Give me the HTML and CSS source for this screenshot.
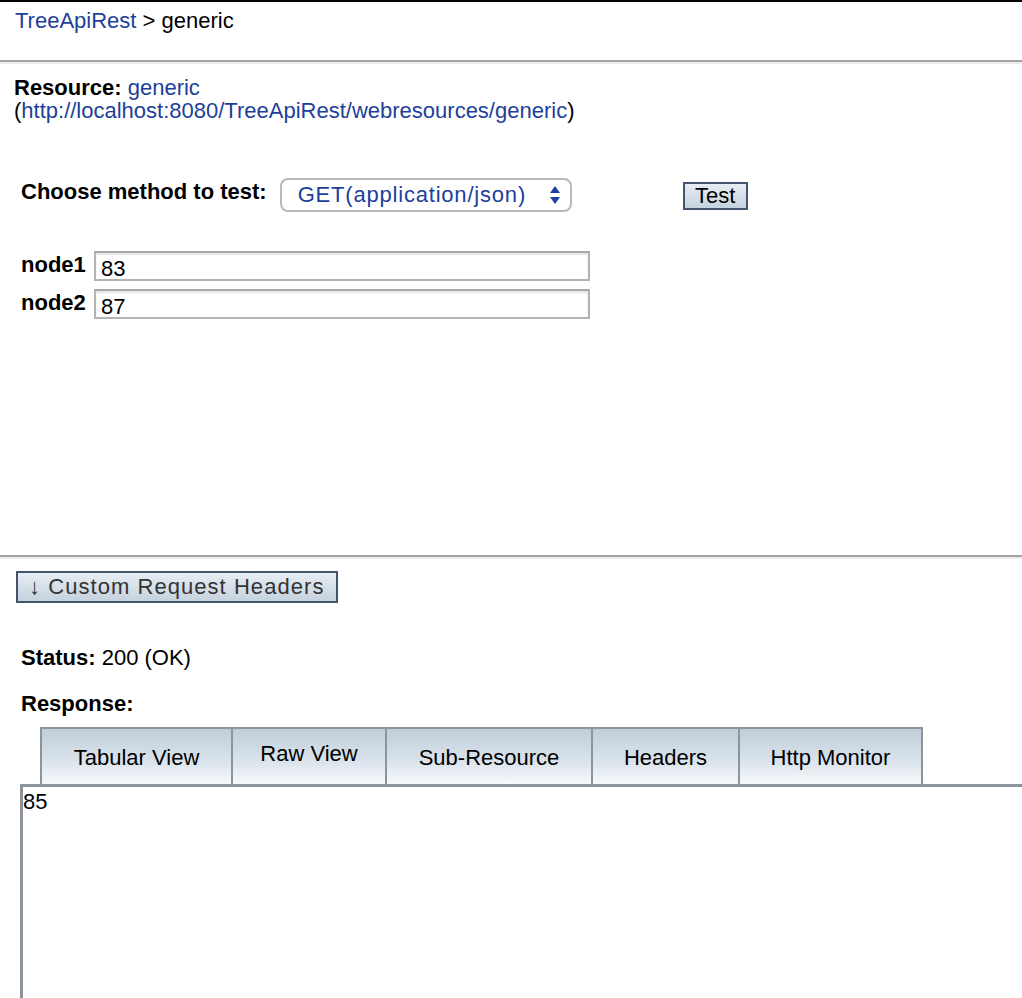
FILE: index.html
```html
<!DOCTYPE html>
<html>
<head>
<meta charset="utf-8">
<title>TreeApiRest</title>
<link rel="stylesheet" href="styles.css">
</head>
<body>
<div class="topbar">
  <div class="crumbs"><a class="link" href="#">TreeApiRest</a> &gt; generic</div>
</div>
<div class="sep"></div>
<div class="resource">
  <div><b>Resource:</b> <a class="link" href="#">generic</a></div>
  <div>(<a class="link" href="#">http://localhost:8080/TreeApiRest/webresources/generic</a>)</div>
</div>
<div class="form">
  <div class="method-row">
    <span class="label">Choose method to test:</span>
    <div class="select">
      <span>GET(application/json)</span>
      <svg class="arrows" width="10" height="18" viewBox="0 0 10 18"><path d="M5 0 L10 7 L0 7 Z M0 11 L10 11 L5 18 Z" fill="#1f3f9e"/></svg>
    </div>
    <button class="btn test">Test</button>
  </div>
  <div class="params">
    <div class="param"><span class="label">node1</span><div class="input">83</div></div>
    <div class="param"><span class="label">node2</span><div class="input">87</div></div>
  </div>
</div>
<div class="sep"></div>
<div class="results">
  <button class="btn headers">↓ Custom Request Headers</button>
  <div class="status"><b>Status:</b> 200 (OK)</div>
  <div class="response-label"><b>Response:</b></div>
  <div class="tabs">
    <div class="tab t1">Tabular View</div>
    <div class="tab t2 raised">Raw View</div>
    <div class="tab t3">Sub-Resource</div>
    <div class="tab t4">Headers</div>
    <div class="tab t5">Http Monitor</div>
  </div>
  <div class="content">85</div>
</div>
</body>
</html>
```
FILE: styles.css
```css
html, body {
  margin: 0;
  padding: 0;
  background: #fff;
}
body {
  font-family: "Liberation Sans", Arial, sans-serif;
  font-size: 22px;
  color: #000;
  overflow: hidden;
  height: 998px;
}
.link {
  color: #1d3f9a;
  text-decoration: none;
}
.topbar {
  border-top: 2px solid #000;
  height: 58px;
}
.crumbs {
  padding: 6px 0 0 15px;
  line-height: 25px;
}
.sep {
  border-top: 2px solid #a2a2a2;
  border-bottom: 2px solid #ececec;
}
.resource {
  padding: 12px 0 0 14px;
  line-height: 23px;
}
.form {
  padding: 55px 0 0 21px;
  height: 433px;
  box-sizing: border-box;
}
.method-row {
  display: flex;
  align-items: flex-start;
}
.method-row .label {
  font-weight: bold;
  line-height: 25px;
  margin-top: 2px;
}
.select {
  margin-left: 13px;
  margin-top: 1px;
  width: 292px;
  height: 34px;
  box-sizing: border-box;
  border: 2px solid #b9b9b9;
  border-radius: 8px;
  display: flex;
  align-items: center;
  justify-content: space-between;
  padding: 0 10px 0 16px;
  color: #1d3f9a;
  font-size: 22px;
  letter-spacing: 0.8px;
  background: #fff;
}
.arrows {
  display: block;
}
.btn {
  font-family: "Liberation Sans", Arial, sans-serif;
  border: 2px solid #44546c;
  background: linear-gradient(#e7edf3, #c5d2de);
  padding: 0;
  margin: 0;
  color: #000;
  cursor: pointer;
}
.test {
  margin-left: 111px;
  margin-top: 5px;
  width: 65px;
  height: 28px;
  font-size: 22px;
  line-height: 22px;
}
.params {
  margin-top: 39px;
  display: flex;
  flex-direction: column;
  gap: 8px;
}
.param {
  display: flex;
  align-items: flex-start;
}
.param .label {
  font-weight: bold;
  width: 73px;
  line-height: 25px;
  margin-top: 1px;
}
.input {
  width: 496px;
  height: 30px;
  box-sizing: border-box;
  border: 2px solid #b3b3b3;
  border-top-color: #a8a8a8;
  box-shadow: inset 0 2px 2px #e6e6e6;
  padding: 3px 0 0 5px;
  line-height: 25px;
}
.results {
  padding: 12px 0 0 20px;
}
.headers {
  margin-left: -4px;
  width: 322px;
  height: 32px;
  font-size: 22px;
  letter-spacing: 1.05px;
  color: #333;
  text-align: left;
  padding-left: 11px;
  display: block;
}
.status {
  margin-top: 42px;
  line-height: 25px;
  padding-left: 1px;
}
.response-label {
  margin-top: 21px;
  line-height: 25px;
  padding-left: 1px;
}
.tabs {
  margin-top: 11px;
  margin-left: 20px;
  display: flex;
  height: 57px;
}
.tab {
  box-sizing: border-box;
  height: 57px;
  border: 2px solid #8a959e;
  border-bottom: 0;
  border-right: 0;
  background: linear-gradient(#bfcdd9, #dbe4ec 60%, #f7f9fb);
  text-align: center;
  padding-top: 16px;
  line-height: 25px;
}
.tab.t5 {
  border-right: 2px solid #8a959e;
}
.tab.raised {
  padding-top: 12px;
}
.t1 { width: 191px; }
.t2 { width: 154px; }
.t3 { width: 206px; }
.t4 { width: 147px; }
.t5 { width: 185px; }
.content {
  border-top: 3px solid #8a959e;
  border-left: 3px solid #8a959e;
  height: 210px;
  padding: 2px 0 0 0;
  line-height: 25px;
}
```
